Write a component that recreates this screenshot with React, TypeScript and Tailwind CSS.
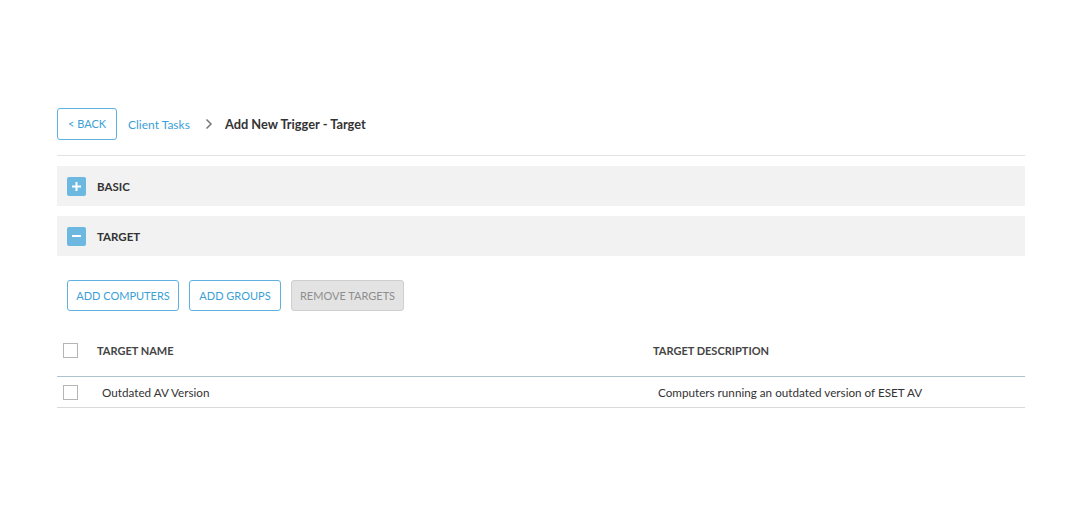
import React from 'react';

function Checkbox() {
  return <span className="block w-[15px] h-[15px] border border-[#b5b5b5] bg-white" />;
}

function SectionHeader({ label, open }: { label: string; open: boolean }) {
  return (
    <div className="flex items-center h-10 bg-[#f2f2f2] px-[10px] gap-[11px]">
      <span className="flex items-center justify-center w-[19px] h-[19px] rounded-[2px] bg-[#6cb8e0]">
        {open ? (
          <span className="block w-[9px] h-[2px] bg-white" />
        ) : (
          <svg width="9" height="9" viewBox="0 0 9 9">
            <rect x="3.5" y="0" width="2" height="9" fill="#fff" />
            <rect x="0" y="3.5" width="9" height="2" fill="#fff" />
          </svg>
        )}
      </span>
      <span className="pt-[2px] text-[11.5px] font-bold text-[#333]">{label}</span>
    </div>
  );
}

export default function App() {
  return (
    <div className="min-h-screen bg-white pt-[108px] px-[57px] text-[#333]" style={{ fontFamily: 'Lato, "Open Sans", sans-serif' }}>
      <div className="w-[968px]">
        {/* Breadcrumb */}
        <div className="flex items-center pb-[15px] border-b border-[#e3e3e3]">
          <button className="h-8 w-[60px] pt-px border border-[#5fb2e0] rounded-[3px] text-[11px] text-[#3b9fd6]">
            &lt; BACK
          </button>
          <span className="ml-[11px] pt-[2px] text-[12px] text-[#3b9fd6]">Client Tasks</span>
          <svg className="ml-[15px]" width="8" height="12" viewBox="0 0 8 12">
            <path d="M1.5 1.5 L6 6 L1.5 10.5" stroke="#777" strokeWidth="1.5" fill="none" />
          </svg>
          <span className="ml-[12px] pt-[2px] text-[12.8px] font-bold text-[#333]">Add New Trigger - Target</span>
        </div>

        <div className="mt-[10px] flex flex-col gap-[10px]">
          <SectionHeader label="BASIC" open={false} />
          <SectionHeader label="TARGET" open={true} />
        </div>

        {/* Actions */}
        <div className="flex gap-[10px] mt-[24px] px-[10px]">
          <button className="h-[31px] w-[112px] pt-px whitespace-nowrap border border-[#5fb2e0] rounded-[3px] text-[11px] text-[#3b9fd6]">
            ADD COMPUTERS
          </button>
          <button className="h-[31px] w-[92px] pt-px whitespace-nowrap border border-[#5fb2e0] rounded-[3px] text-[11px] text-[#3b9fd6]">
            ADD GROUPS
          </button>
          <button className="h-[31px] w-[113px] pt-px whitespace-nowrap border border-[#cfcfcf] bg-[#e3e3e3] rounded-[3px] text-[11px] text-[#8e8e8e]">
            REMOVE TARGETS
          </button>
        </div>

        {/* Table */}
        <div className="mt-[21px]">
          <div className="flex items-start h-[45px] border-b border-[#aec3cd] pt-[11px]">
            <div className="w-[40px] pl-[6px]"><Checkbox /></div>
            <div className="w-[556px] text-[11px] font-bold text-[#444]">TARGET NAME</div>
            <div className="flex-1 text-[11px] font-bold text-[#444]">TARGET DESCRIPTION</div>
          </div>
          <div className="flex items-center h-[31px] border-b border-[#d9d9d9]">
            <div className="w-[45px] pl-[6px]"><Checkbox /></div>
            <div className="w-[556px] pt-[2px] text-[11.7px] text-[#333]">Outdated AV Version</div>
            <div className="flex-1 pt-[2px] text-[11.7px] text-[#333]">Computers running an outdated version of ESET AV</div>
          </div>
        </div>
      </div>
    </div>
  );
}
